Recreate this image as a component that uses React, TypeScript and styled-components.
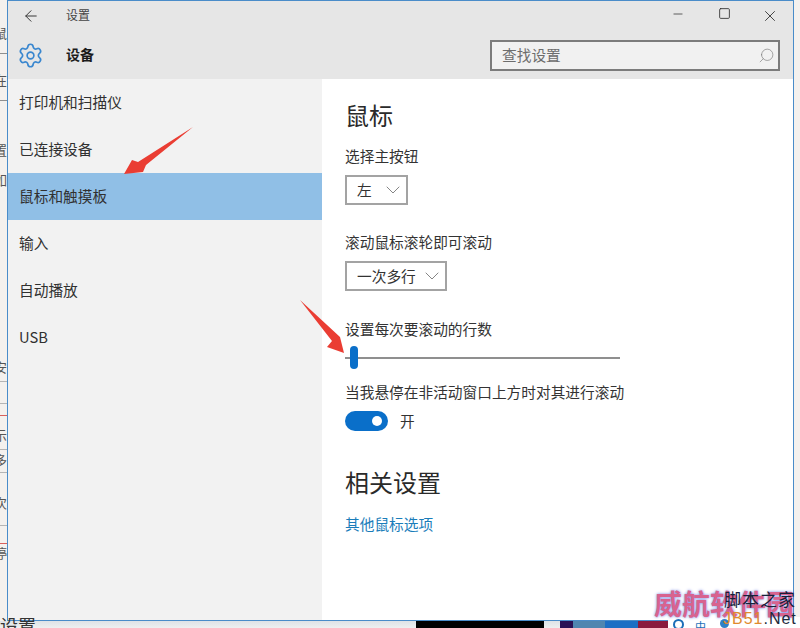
import React from 'react';
import styled, { createGlobalStyle } from 'styled-components';
import { ArrowLeft, ChevronDown, Minus, Search, Settings, Square, X } from 'lucide-react';

const GlobalStyle = createGlobalStyle`
  html, body {
    margin: 0;
    padding: 0;
    background: #fff;
  }
  body {
    font-family: "Noto Sans CJK SC", "Noto Sans", sans-serif;
    color: #2b2b2b;
  }
`;

const Screen = styled.div`
  position: relative;
  width: 800px;
  height: 628px;
  overflow: hidden;
  background: #f4f1ee;
`;

const Desktop = styled.div`
  display: flex;
  height: 621px;
`;

const BehindLeft = styled.div`
  width: 7px;
  flex: none;
  display: flex;
  flex-direction: column;
  font-size: 13px;
  line-height: 16px;
  color: #555;
  overflow: hidden;
  white-space: nowrap;
`;

const BehindLine = styled.div<{ $top: number; $rule?: string }>`
  margin-top: ${(p) => p.$top}px;
  display: flex;
  justify-content: flex-end;
  height: ${(p) => (p.$rule ? 1 : 16)}px;
  background: ${(p) => p.$rule || 'transparent'};
`;

const Window = styled.div`
  width: 785px;
  flex: none;
  display: flex;
  flex-direction: column;
  border: 1px solid #4a8cc9;
  background: #fff;
`;

const Header = styled.header`
  height: 78px;
  flex: none;
  background: #e6e6e6;
  display: flex;
  flex-direction: column;
`;

const TitleBar = styled.div`
  height: 29px;
  flex: none;
  display: flex;
  align-items: center;
  padding-left: 14px;
  font-size: 12px;
  color: #444;
`;

const BackButton = styled.span`
  width: 44px;
  display: flex;
  color: #333;
`;

const TitleText = styled.span`
  padding-bottom: 2px;
`;

const WindowButtons = styled.div`
  margin-left: auto;
  display: flex;
`;

const WindowButton = styled.span`
  width: 46px;
  display: flex;
  justify-content: center;
  color: #333;
`;

const TitleRow = styled.div`
  flex: 1;
  display: flex;
  align-items: center;
  padding: 2px 13px 0 9px;
`;

const PageName = styled.div`
  margin-left: 22px;
  padding-bottom: 4px;
  font-size: 14px;
  font-weight: 700;
  color: #1c1c1c;
`;

const SearchBox = styled.div`
  margin-left: auto;
  width: 290px;
  height: 31px;
  box-sizing: border-box;
  border: 2px solid #7c7c7c;
  background: #f1f1f1;
  display: flex;
  align-items: center;
  justify-content: space-between;
  padding: 0 3px 3px 10px;
  font-size: 14.7px;
  color: #6d6d6d;
`;

const SearchGlyph = styled(Search)`
  margin-top: 3px;
  transform: scaleX(-1);
`;

const Body = styled.div`
  flex: 1;
  display: flex;
  min-height: 0;
`;

const Sidebar = styled.nav`
  width: 314px;
  flex: none;
  background: #f2f2f2;
`;

const NavItem = styled.div<{ $active?: boolean }>`
  height: 47px;
  box-sizing: border-box;
  display: flex;
  align-items: center;
  padding: 0 0 2px 11px;
  font-size: 14.7px;
  color: #303030;
  background: ${(p) => (p.$active ? '#90bfe6' : 'transparent')};
`;

const Content = styled.main`
  flex: 1;
  padding: 18px 0 0 23px;
  display: flex;
  flex-direction: column;
  align-items: flex-start;
`;

const Heading = styled.h2<{ $top?: number }>`
  margin: ${(p) => p.$top || 0}px 0 0;
  font-size: 24px;
  line-height: 36px;
  font-weight: 400;
  color: #2a2a2a;
`;

const Label = styled.div<{ $top: number }>`
  margin-top: ${(p) => p.$top}px;
  font-size: 14.7px;
  line-height: 22px;
  color: #333;
`;

const Select = styled.div<{ $width: number }>`
  margin-top: 8px;
  width: ${(p) => p.$width}px;
  height: 30px;
  box-sizing: border-box;
  border: 2px solid #a3a3a3;
  display: flex;
  align-items: center;
  justify-content: space-between;
  padding: 0 1px 2px 10px;
  font-size: 14.7px;
  color: #333;
`;

const Chevron = styled(ChevronDown)`
  margin-top: 2px;
`;

const Slider = styled.div`
  position: relative;
  margin-top: 6px;
  width: 275px;
  height: 23px;
  display: flex;
  align-items: center;
`;

const Track = styled.div`
  width: 100%;
  height: 2px;
  background: #8f8f8f;
`;

const Thumb = styled.div`
  position: absolute;
  left: 5px;
  top: 0;
  width: 8px;
  height: 23px;
  border-radius: 4px;
  background: #0a6fc9;
`;

const ToggleRow = styled.div`
  margin-top: 7px;
  display: flex;
  align-items: center;
  gap: 12px;
  font-size: 14.7px;
  color: #333;
`;

const Toggle = styled.div`
  width: 43px;
  height: 20px;
  box-sizing: border-box;
  border-radius: 10px;
  background: #0a6fc9;
  display: flex;
  align-items: center;
  justify-content: flex-end;
  padding-right: 6px;
`;

const Knob = styled.span`
  width: 10px;
  height: 10px;
  border-radius: 50%;
  background: #fff;
`;

const Link = styled.a`
  margin-top: 13px;
  font-size: 14.7px;
  line-height: 22px;
  color: #1a7dba;
`;

const Taskbar = styled.div`
  height: 7px;
  display: flex;
  position: relative;
  background: linear-gradient(#dfe3e6, #eef0f1);
`;

const TaskLabel = styled.span`
  position: absolute;
  left: 0;
  top: -8px;
  font-size: 18px;
  line-height: 24px;
  color: #333;
`;

const TaskBlock = styled.div<{ $width: number; $color: string; $gap?: number }>`
  width: ${(p) => p.$width}px;
  margin-left: ${(p) => p.$gap || 0}px;
  background: ${(p) => p.$color};
`;

const TraySearch = styled.div`
  position: absolute;
  left: 668px;
  right: 0;
  top: -4px;
  height: 11px;
  background: #fff;
  display: flex;
  align-items: flex-start;
  gap: 11px;
  padding: 2px 0 0 5px;
  font-size: 11px;
  line-height: 14px;
  color: #1d6fb8;
`;

const TrayRing = styled.span`
  width: 11px;
  height: 11px;
  box-sizing: border-box;
  border: 2px solid #1d6fb8;
  border-radius: 50%;
`;

const TrayDot = styled.span`
  width: 9px;
  height: 9px;
  margin-left: 3px;
  border-radius: 50%;
  background: #2f80c8;
`;

const Arrow = styled.svg`
  position: absolute;
  left: 0;
  top: 0;
  pointer-events: none;
`;

const Watermark = styled.div`
  position: absolute;
  left: 654px;
  top: 586px;
  width: 146px;
  height: 42px;
`;

const MarkCn = styled.div`
  position: absolute;
  left: 0;
  top: -1px;
  font-size: 28px;
  line-height: 36px;
  font-weight: 700;
  white-space: nowrap;
  color: #d8638f;
  text-shadow: 0 0 3px #6f7fe0;
`;

const MarkSite = styled.div`
  position: absolute;
  left: 70px;
  top: 1px;
  font-size: 17px;
  line-height: 24px;
  letter-spacing: 1px;
  color: #17203a;
  white-space: nowrap;
`;

const MarkUrl = styled.div`
  position: absolute;
  left: 69px;
  top: 24px;
  font-family: "Liberation Sans", sans-serif;
  font-size: 16px;
  line-height: 18px;
  letter-spacing: 1px;
  color: #1c2a3c;
  white-space: nowrap;
`;

const MarkOrange = styled.span`
  color: #e08a2d;
`;

const navItems = ['打印机和扫描仪', '已连接设备', '鼠标和触摸板', '输入', '自动播放', 'USB'];

// the window behind the settings app, only its right edge shows
const behind: { top: number; text?: string; rule?: string }[] = [
  { top: 25, text: '鼠' },
  { top: 12, rule: '#8f8f8f' },
  { top: 18, text: '在' },
  { top: 12, rule: '#8f8f8f' },
  { top: 41, text: '置' },
  { top: 14, text: '如' },
  { top: 171, text: '安' },
  { top: 6, rule: '#b5b5b5' },
  { top: 21, rule: '#b5b5b5' },
  { top: 11, rule: '#d8605c' },
  { top: 11, text: '示' },
  { top: 6, rule: '#b5b5b5' },
  { top: 2, text: '多' },
  { top: 4, rule: '#b5b5b5' },
  { top: 22, text: '次' },
  { top: 14, rule: '#b5b5b5' },
  { top: 17, rule: '#d8605c' },
  { top: 1, text: '停' },
];

const App: React.FC = () => {
  return (
    <Screen>
      <GlobalStyle />
      <Desktop>
        <BehindLeft>
          {behind.map((line, i) => (
            <BehindLine key={i} $top={line.top} $rule={line.rule}>
              {line.text}
            </BehindLine>
          ))}
        </BehindLeft>
        <Window>
          <Header>
            <TitleBar>
              <BackButton>
                <ArrowLeft size={18} strokeWidth={1.3} />
              </BackButton>
              <TitleText>设置</TitleText>
              <WindowButtons>
                <WindowButton>
                  <Minus size={14} strokeWidth={1.3} />
                </WindowButton>
                <WindowButton>
                  <Square size={13} strokeWidth={1.6} />
                </WindowButton>
                <WindowButton>
                  <X size={18} strokeWidth={1.2} />
                </WindowButton>
              </WindowButtons>
            </TitleBar>
            <TitleRow>
              <Settings size={27} strokeWidth={1.5} color="#3a87cf" />
              <PageName>设备</PageName>
              <SearchBox>
                查找设置
                <SearchGlyph size={17} strokeWidth={0.9} color="#777" />
              </SearchBox>
            </TitleRow>
          </Header>
          <Body>
            <Sidebar>
              {navItems.map((item) => (
                <NavItem key={item} $active={item === '鼠标和触摸板'}>
                  {item}
                </NavItem>
              ))}
            </Sidebar>
            <Content>
              <Heading>鼠标</Heading>
              <Label $top={12}>选择主按钮</Label>
              <Select $width={63}>
                左
                <Chevron size={24} strokeWidth={0.9} color="#777" />
              </Select>
              <Label $top={26}>滚动鼠标滚轮即可滚动</Label>
              <Select $width={102}>
                一次多行
                <Chevron size={24} strokeWidth={0.9} color="#777" />
              </Select>
              <Label $top={27}>设置每次要滚动的行数</Label>
              <Slider>
                <Track />
                <Thumb />
              </Slider>
              <Label $top={12}>当我悬停在非活动窗口上方时对其进行滚动</Label>
              <ToggleRow>
                <Toggle>
                  <Knob />
                </Toggle>
                开
              </ToggleRow>
              <Heading $top={33}>相关设置</Heading>
              <Link>其他鼠标选项</Link>
            </Content>
          </Body>
        </Window>
      </Desktop>
      <Taskbar>
        <TaskLabel>设置</TaskLabel>
        <TaskBlock $gap={416} $width={128} $color="#000" />
        <TaskBlock $gap={16} $width={13} $color="#2a1155" />
        <TaskBlock $width={32} $color="#4f86b0" />
        <TaskBlock $width={33} $color="#1d6fc4" />
        <TaskBlock $width={30} $color="#8b1a3d" />
        <TraySearch>
          <TrayRing />
          <span>中</span>
          <TrayDot />
        </TraySearch>
      </Taskbar>
      <Arrow width="800" height="628" viewBox="0 0 800 628">
        <polygon points="193,127 146,165 143,172 124,174 132,160 138,162" fill="#ea3d33" />
        <polygon points="300,300 340,337 344,353 327,347 332,341" fill="#ea3d33" />
      </Arrow>
      <Watermark>
        <MarkCn>威航软件园</MarkCn>
        <MarkSite>脚本之家</MarkSite>
        <MarkUrl>
          <MarkOrange>JB51</MarkOrange>.Net
        </MarkUrl>
      </Watermark>
    </Screen>
  );
};

export default App;
